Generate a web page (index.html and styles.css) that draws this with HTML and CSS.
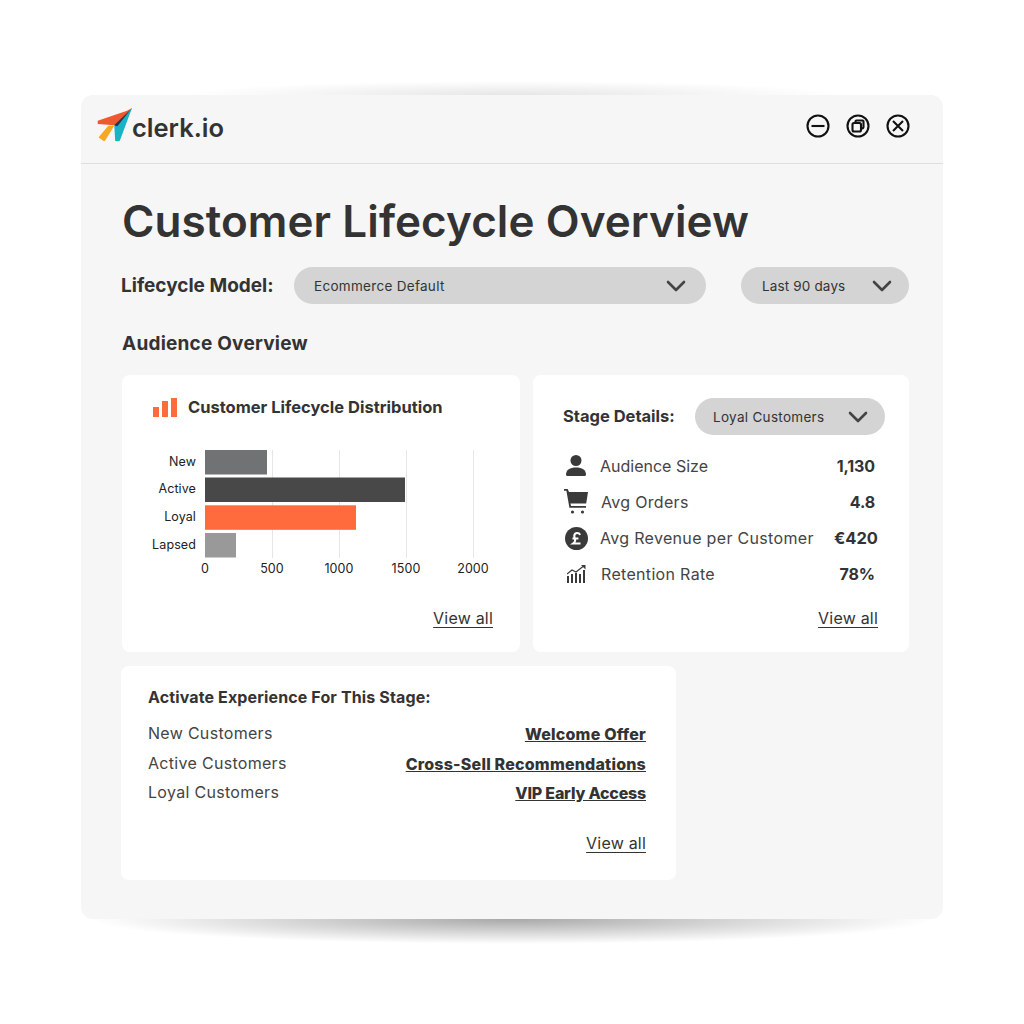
FILE: index.html
```html
<!DOCTYPE html>
<html lang="en">
<head>
<meta charset="utf-8">
<title>Customer Lifecycle Overview</title>
<link rel="stylesheet" href="styles.css">
</head>
<body>
<div class="window">
  <header class="titlebar">
    <div class="brand">
      <svg class="logo" width="36" height="36" viewBox="0 0 36 36">
        <path d="M.7 12.700L30 2.700 35 0 17.300 17.300 .7 16z" fill="#f0592f"/>
        <path d="M2 28.700L11.300 17.700h6L8 32.700c-.5.5-1 .5-1.500.2L2.300 30c-.5-.4-.6-.9-.3-1.300z" fill="#f7a823"/>
        <path d="M17.300 18L35 0 23 32.200c-.3.8-1 1.200-1.800 1.100l-3-.3z" fill="#19b3c6"/>
        <path d="M17 17.300L35 0 20.300 18.300z" fill="#25384a"/>
      </svg>
      <span class="wordmark">clerk.io</span>
    </div>
    <div class="controls">
      <svg width="24" height="24" viewBox="0 0 24 24" class="ctl"><circle cx="12" cy="12" r="10.500"/><path d="M5.500 12h13"/></svg>
      <svg width="24" height="24" viewBox="0 0 24 24" class="ctl"><circle cx="12" cy="12" r="10.500"/><rect x="6.500" y="9" width="8.500" height="8.500" rx="1.500"/><path d="M9.500 9V7.500C9.500 6.800 10 6.500 10.500 6.500H16.500C17.200 6.500 17.500 7 17.500 7.500V13C17.500 13.800 17 14.500 15 14.500"/></svg>
      <svg width="24" height="24" viewBox="0 0 24 24" class="ctl"><circle cx="12" cy="12" r="10.500"/><path d="M7 7l10 10M17 7L7 17"/></svg>
    </div>
  </header>

  <main class="content">
    <h1 class="title">Customer Lifecycle Overview</h1>

    <div class="filters">
      <span class="filter-label">Lifecycle Model:</span>
      <div class="select select-model"><span>Ecommerce Default</span><svg class="chev" width="20" height="12" viewBox="0 0 20 12"><path d="M2 2l8 8 8-8"/></svg></div>
      <div class="select select-range"><span>Last 90 days</span><svg class="chev" width="20" height="12" viewBox="0 0 20 12"><path d="M2 2l8 8 8-8"/></svg></div>
    </div>

    <h2 class="section">Audience Overview</h2>

    <div class="cards">
      <section class="card dist">
        <div class="dist-head">
          <svg class="bars-icon" width="26" height="20" viewBox="0 0 26 20"><rect x="1" y="10" width="6" height="10" fill="#ff6b3d"/><rect x="10" y="4" width="6" height="16" fill="#ff6b3d"/><rect x="19" y="1" width="6" height="19" fill="#ff6b3d"/></svg>
          <h3 class="card-title">Customer Lifecycle Distribution</h3>
        </div>
        <svg class="chart" width="370" height="140" viewBox="0 0 370 140">
          <g class="grid">
            <line x1="150.500" y1="10" x2="150.500" y2="118"/>
            <line x1="217.500" y1="10" x2="217.500" y2="118"/>
            <line x1="284.500" y1="10" x2="284.500" y2="118"/>
            <line x1="351.500" y1="10" x2="351.500" y2="118"/>
          </g>
          <rect x="83" y="10" width="62" height="24.500" fill="#707273"/>
          <rect x="83" y="37.500" width="200" height="24.500" fill="#484848"/>
          <rect x="83" y="65.300" width="151" height="24.500" fill="#ff6b3d"/>
          <rect x="83" y="93" width="31" height="24.500" fill="#999999"/>
          <g class="ylab">
            <text x="74" y="25.500">New</text>
            <text x="74" y="53">Active</text>
            <text x="74" y="81">Loyal</text>
            <text x="74" y="109">Lapsed</text>
          </g>
          <g class="xlab">
            <text x="83" y="133">0</text>
            <text x="150" y="133">500</text>
            <text x="217" y="133">1000</text>
            <text x="284" y="133">1500</text>
            <text x="351" y="133">2000</text>
          </g>
        </svg>
        <a class="viewall">View all</a>
      </section>

      <section class="card stage">
        <div class="stage-head">
          <h3 class="stage-title">Stage Details:</h3>
          <div class="select select-stage"><span>Loyal Customers</span><svg class="chev" width="20" height="12" viewBox="0 0 20 12"><path d="M2 2l8 8 8-8"/></svg></div>
        </div>
        <ul class="metrics">
          <li class="metric">
            <span class="slot"><svg width="22" height="21" viewBox="0 0 22 21" fill="#3a3a3a"><circle cx="11" cy="5.500" r="5.500"/><path d="M1 19.500c0-4.500 4-7 10-7s10 2.500 10 7c0 .8-.6 1.500-1.300 1.500H2.300c-.7 0-1.300-.7-1.300-1.500z"/></svg></span>
            <span class="metric-name metric-name-tight">Audience Size</span><b class="metric-val">1,130</b>
          </li>
          <li class="metric">
            <span class="slot"><svg width="24" height="25" viewBox="0 0 24 25" fill="#3a3a3a"><path d="M0 0h3.700l1.300 3H24l-1.800 11.500H6.500l.5 2.500H22v1.800H5.400L2.400 1.800H0z"/><circle cx="8.500" cy="23" r="1.600"/><circle cx="18.500" cy="23" r="1.600"/></svg></span>
            <span class="metric-name metric-name-in">Avg Orders</span><b class="metric-val">4.8</b>
          </li>
          <li class="metric">
            <span class="slot"><svg width="23" height="23" viewBox="0 0 24 24"><circle cx="12" cy="12" r="12" fill="#3a3a3a"/><path d="M15.800 8.200C15.100 6.800 13.900 6.300 12.700 6.300 10.900 6.300 9.700 7.400 9.700 9.200c0 2.500 1.200 3.400.8 5.300-.2 1-.8 2-1.800 2.700h7.500M7.800 12h6.200" fill="none" stroke="#fff" stroke-width="2.200"/></svg></span>
            <span class="metric-name">Avg Revenue per Customer</span><b class="metric-val metric-val-wide">€420</b>
          </li>
          <li class="metric">
            <span class="slot"><svg width="19" height="18" viewBox="0 0 19 18" fill="#3a3a3a"><rect x="0" y="11" width="2" height="7"/><rect x="4" y="9" width="2" height="9"/><rect x="8" y="8" width="2" height="10"/><rect x="12" y="9" width="2" height="9"/><rect x="16" y="5" width="2" height="13"/><path d="M0 9l5-4 4 2 7-5.500" fill="none" stroke="#3a3a3a" stroke-width="1.200"/><path d="M14 0h4.500v4.500z"/></svg></span>
            <span class="metric-name metric-name-in">Retention Rate</span><b class="metric-val">78%</b>
          </li>
        </ul>
        <a class="viewall">View all</a>
      </section>
    </div>

    <section class="card activate">
      <h3 class="activate-title">Activate Experience For This Stage:</h3>
      <div class="rows">
        <div class="row"><span class="row-name">New Customers</span><a class="action">Welcome Offer</a></div>
        <div class="row"><span class="row-name">Active Customers</span><a class="action">Cross-Sell Recommendations</a></div>
        <div class="row"><span class="row-name">Loyal Customers</span><a class="action action-tight">VIP Early Access</a></div>
      </div>
      <a class="viewall">View all</a>
    </section>
  </main>
</div>
</body>
</html>
```
FILE: styles.css
```css
* { box-sizing: border-box; }
html, body { margin: 0; padding: 0; background: #fff; }
body { padding: 95px 81px; font-family: "Inter", "Liberation Sans", sans-serif; color: #333; }
.window { position: relative; width: 862px; height: 824px; background: #f6f6f6; border-radius: 12px; }
.window::before { content: ""; position: absolute; left: 100px; right: 100px; top: -14px; height: 14px; background: radial-gradient(ellipse 50% 100% at 50% 100%, #e6e6e6, rgba(255,255,255,0)); }
.window::after { content: ""; position: absolute; left: 10px; right: 10px; top: 100%; height: 25px; background: radial-gradient(ellipse 50% 100% at 50% 0, #a8a8a8, rgba(255,255,255,0)); }
.titlebar { display: flex; justify-content: space-between; align-items: center; height: 69px; border-bottom: 1px solid #dedede; padding: 0 33.500px 6px 16px; }
.brand { display: flex; align-items: center; }
.logo { display: block; }
.wordmark { font-size: 25.500px; font-weight: 600; color: #333; margin-left: -1px; line-height: 1; padding-top: 4px; }
.controls { display: flex; gap: 16px; }
.ctl { fill: none; stroke: #111; stroke-width: 2.100; }
.content { padding: 0 34px 0 41px; }
.title { margin: 0; padding-top: 31px; font-size: 44px; line-height: 52px; font-weight: 600; letter-spacing: .08px; color: #333; }
.filters { display: flex; align-items: center; margin: 20px 0 0 -1px; height: 37px; }
.filter-label { width: 173px; font-size: 19px; font-weight: 700; flex: none; }
.select { display: flex; align-items: center; justify-content: space-between; height: 37px; border-radius: 19px; background: #d4d4d4; font-size: 13.500px; letter-spacing: .3px; color: #333; flex: none; }
.select-model { width: 412px; padding: 0 20px; }
.select-range { width: 168px; margin-left: 35px; padding: 0 17px 0 21px; letter-spacing: .15px; }
.chev { fill: none; stroke: #444; stroke-width: 2.600; stroke-linecap: round; stroke-linejoin: round; display: block; }
.section { margin: 26px 0 17px; font-size: 19px; line-height: 28px; font-weight: 700; letter-spacing: .22px; }
.cards { display: grid; grid-template-columns: 398px 376px; gap: 13px; }
.card { background: #fff; border-radius: 8px; display: flex; flex-direction: column; }
.dist, .stage { height: 277px; }
.dist { padding: 20px 27px 24px 30px; }
.dist-head { display: flex; align-items: center; gap: 10px; height: 24px; }
.bars-icon { display: block; }
.card-title { margin: 0; font-size: 16.500px; font-weight: 700; }
.chart { display: block; margin: 21px 0 0 -30px; }
.chart .grid line { stroke: #e6e6e6; stroke-width: 1; }
.chart text { font-size: 12.500px; fill: #222; font-family: "Inter", "Liberation Sans", sans-serif; letter-spacing: .1px; }
.ylab text { text-anchor: end; }
.xlab text { text-anchor: middle; }
.viewall { margin-top: auto; align-self: flex-end; font-size: 16px; letter-spacing: .2px; color: #333; text-decoration: underline; text-underline-offset: 3px; line-height: 20px; }
.stage { padding: 23px 31px 24px 30px; }
.stage-head { display: flex; align-items: center; justify-content: space-between; margin-right: -7px; }
.stage-title { margin: 0 0 2px; font-size: 16.500px; font-weight: 700; }
.select-stage { width: 190px; padding: 0 17px 0 18px; }
.metrics { list-style: none; margin: 12.400px 0 0; padding: 0; }
.metric { display: flex; align-items: center; height: 36.300px; font-size: 16px; letter-spacing: .32px; color: #444; }
.slot { flex: none; width: 26px; margin-right: 11px; display: flex; justify-content: center; }
.slot svg { display: block; }
.metric-name { flex: 1; }
.metric-name-tight { letter-spacing: 0; }
.metric-name-in { padding-left: 1px; }
.metric-val { font-size: 16px; font-weight: 700; letter-spacing: -.1px; color: #333; margin-right: 3px; }
.metric-val-wide { font-size: 16.500px; letter-spacing: 0; margin-right: 0; }
.activate { width: 555px; height: 214px; margin: 14px 0 0 -1px; padding: 20px 30px 27px 27px; }
.activate-title { margin: 0; font-size: 16px; font-weight: 700; line-height: 22px; letter-spacing: .13px; }
.rows { margin-top: 11px; }
.row { display: flex; justify-content: space-between; align-items: center; height: 29.700px; font-size: 16px; color: #444; }
.row-name { padding-bottom: 2px; letter-spacing: .3px; }
.action { font-weight: 800; font-size: 16px; letter-spacing: .2px; color: #333; text-decoration: underline; }
.action-tight { letter-spacing: -.2px; }
```
